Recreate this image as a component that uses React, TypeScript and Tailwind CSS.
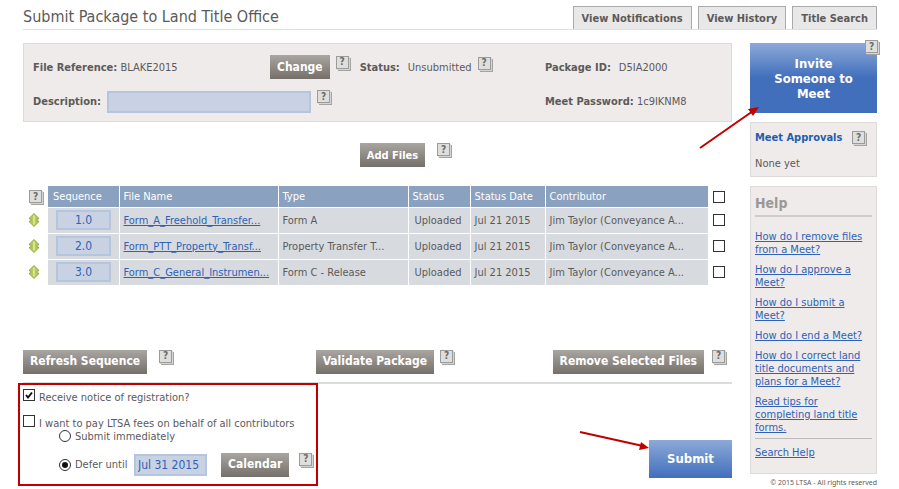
import type { ReactNode } from "react";
import { clsx } from "clsx";

const TABS = ["View Notifications", "View History", "Title Search"];

const FILES = [
  { seq: "1.0", name: "Form_A_Freehold_Transfer...", type: "Form A" },
  { seq: "2.0", name: "Form_PTT_Property_Transf...", type: "Property Transfer T..." },
  { seq: "3.0", name: "Form_C_General_Instrumen...", type: "Form C - Release" },
];

const HELP_LINKS = [
  "How do I remove files from a Meet?",
  "How do I approve a Meet?",
  "How do I submit a Meet?",
  "How do I end a Meet?",
  "How do I correct land title documents and plans for a Meet?",
  "Read tips for completing land title forms.",
];

const FIELD = "border-2 border-[#b4c5dd] bg-[#c9d2e3] text-[#2f62b5] outline-none";

function HelpButton({ className }: { className?: string }) {
  return (
    <button
      type="button"
      aria-label="Help"
      className={clsx(
        "flex size-[13px] shrink-0 items-center justify-center border border-[#9b9b99] bg-[#dededc] text-[10px] leading-none font-bold text-[#6b6b6b] shadow-[1px_1px_0_#d5d5d3,2px_2px_0_#a3a3a1]",
        className
      )}
    >
      ?
    </button>
  );
}

function GrayButton({ children, small }: { children: ReactNode; small?: boolean }) {
  return (
    <button
      type="button"
      className={clsx(
        "h-6 shrink-0 bg-linear-to-b from-[#a9a5a0] to-[#76706a] px-[7px] font-bold whitespace-nowrap text-white",
        small ? "text-[11px]" : "text-[12px]"
      )}
    >
      {children}
    </button>
  );
}

function Checkbox({ id, label, checked }: { id: string; label?: string; checked?: boolean }) {
  return (
    <span className="relative block size-3 shrink-0">
      <input
        id={id}
        type="checkbox"
        aria-label={label}
        defaultChecked={checked}
        className="peer block size-3 appearance-none border border-[#333] bg-white"
      />
      <svg viewBox="0 0 12 12" className="pointer-events-none absolute inset-0 hidden size-3 peer-checked:block">
        <path d="M3 6 L5 8.5 L9 3.5" fill="none" stroke="#111" strokeWidth="2" />
      </svg>
    </span>
  );
}

function Radio({ id, checked }: { id: string; checked?: boolean }) {
  return (
    <input
      id={id}
      type="radio"
      name="payment"
      defaultChecked={checked}
      className="flex size-3 shrink-0 appearance-none items-center justify-center rounded-full border border-[#333] bg-white checked:before:size-1.5 checked:before:rounded-full checked:before:bg-[#111]"
    />
  );
}

function SortIcon() {
  return (
    <svg viewBox="0 0 10 14" className="ml-1.5 block h-3.5 w-2.5">
      <path
        d="M5 .5 L9.5 5 V6 H8 V8 H9.5 V9 L5 13.5 L.5 9 V8 H2 V6 H.5 V5 Z"
        fill="#b7cc58"
        stroke="#94a94a"
        strokeWidth="1"
      />
      <path d="M5 2.5 V11.5" stroke="#d6e38f" strokeWidth="2" />
    </svg>
  );
}

export default function App() {
  return (
    <div className="bg-white pr-[22px] pl-[23px] font-['DejaVu_Sans_Condensed','DejaVu_Sans',sans-serif] text-[11px] leading-[13px] text-[#5c5a59]">
      {/* Header */}
      <header className="flex items-end justify-between border-b border-[#e0e0e0] pt-1.5">
        <h1 className="pb-0.5 text-[16px] leading-5">Submit Package to Land Title Office</h1>
        <nav className="flex gap-1.5">
          {TABS.map((tab) => (
            <a
              key={tab}
              href="#"
              className="h-[23px] border border-b-0 border-[#aaa] bg-[#e8e8e8] px-2 pt-[5px] text-[11px] leading-[14px] font-bold"
            >
              {tab}
            </a>
          ))}
        </nav>
      </header>

      <div className="flex gap-[18px] pt-[13px]">
        <main className="min-w-0 flex-1">
          {/* Package details */}
          <section className="grid h-[79px] grid-cols-[237px_275px_1fr] grid-rows-[46px_1fr] items-center border border-[#dedad7] bg-[#eeebea] pl-[9px]">
            <div>
              <b>File Reference:</b> BLAKE2015
            </div>
            <div className="flex items-center">
              <GrayButton>Change</GrayButton>
              <HelpButton className="mb-2.5 ml-1.5" />
              <b className="ml-[11px]">Status:</b>
              <span className="ml-2">Unsubmitted</span>
              <HelpButton className="mb-2 ml-1.5" />
            </div>
            <div>
              <b>Package ID:</b>
              <span className="ml-2">D5IA2000</span>
            </div>
            <div className="col-span-2 flex items-center pb-[11px]">
              <label htmlFor="description" className="w-[74px] font-bold">
                Description:
              </label>
              <input id="description" className={clsx(FIELD, "h-[22px] w-[204px] px-1")} />
              <HelpButton className="mb-2.5 ml-1.5" />
            </div>
            <div className="pb-[11px]">
              <b>Meet Password:</b> 1c9IKNM8
            </div>
          </section>

          <div className="flex justify-center gap-3 pt-[21px] pl-[55px]">
            <GrayButton small>Add Files</GrayButton>
            <HelpButton />
          </div>

          {/* Package files */}
          <table className="mt-[19px] w-full table-fixed text-left whitespace-nowrap">
            <thead>
              <tr className="h-[21px] font-normal text-white">
                <th className="w-[25px] pl-1.5">
                  <HelpButton />
                </th>
                <th className="w-[71px] border-r border-b border-white bg-[#8aa1bf] pl-[5px] font-normal">Sequence</th>
                <th className="w-[159px] border-r border-b border-white bg-[#8aa1bf] pl-1 font-normal">File Name</th>
                <th className="w-[130px] border-r border-b border-white bg-[#8aa1bf] pl-1 font-normal">Type</th>
                <th className="w-[62px] border-r border-b border-white bg-[#8aa1bf] pl-1 font-normal">Status</th>
                <th className="w-[75px] border-r border-b border-white bg-[#8aa1bf] pl-1 font-normal">Status Date</th>
                <th className="border-b border-white bg-[#8aa1bf] pl-1 font-normal">Contributor</th>
                <th className="w-6 pl-[5px]">
                  <Checkbox id="all-files" label="Select all files" />
                </th>
              </tr>
            </thead>
            <tbody>
              {FILES.map((file) => (
                <tr key={file.seq} className="h-[26px]">
                  <td>
                    <SortIcon />
                  </td>
                  <td className="border-r border-b border-white bg-[#d7dadf] pl-2">
                    <input
                      aria-label={`Sequence of ${file.name}`}
                      defaultValue={file.seq}
                      className={clsx(FIELD, "block h-5 w-[55px] text-center text-[12px]")}
                    />
                  </td>
                  <td className="border-r border-b border-white bg-[#d7dadf] pl-1">
                    <a href="#" className="text-[#2f62b5] underline">
                      {file.name}
                    </a>
                  </td>
                  <td className="border-r border-b border-white bg-[#d7dadf] pl-1">{file.type}</td>
                  <td className="border-r border-b border-white bg-[#d7dadf] pl-1.5">Uploaded</td>
                  <td className="border-r border-b border-white bg-[#d7dadf] pl-1">Jul 21 2015</td>
                  <td className="border-b border-white bg-[#d7dadf] pl-1">Jim Taylor (Conveyance A...</td>
                  <td className="pl-[5px]">
                    <Checkbox id={`file-${file.seq}`} label={`Select ${file.name}`} />
                  </td>
                </tr>
              ))}
            </tbody>
          </table>

          {/* File actions */}
          <div className="mt-16 flex justify-between border-b-2 border-[#dcdcdc] pr-[7px] pb-2">
            <div className="flex gap-3">
              <GrayButton>Refresh Sequence</GrayButton>
              <HelpButton />
            </div>
            <div className="ml-11 flex gap-1.5">
              <GrayButton>Validate Package</GrayButton>
              <HelpButton />
            </div>
            <div className="flex gap-2">
              <GrayButton>Remove Selected Files</GrayButton>
              <HelpButton />
            </div>
          </div>

          <div className="-mt-px flex items-end justify-between">
            {/* Registration options */}
            <section className="-ml-[5px] w-[300px] border-2 border-[#c00000] pt-1 pb-[7px] pl-[3px]">
              <div className="flex items-start gap-1">
                <Checkbox id="notice" checked />
                <label htmlFor="notice" className="pt-0.5">Receive notice of registration?</label>
              </div>
              <div className="mt-[11px] flex items-start gap-1">
                <Checkbox id="pay-fees" />
                <label htmlFor="pay-fees" className="pt-0.5 whitespace-nowrap">
                  I want to pay LTSA fees on behalf of all contributors
                </label>
              </div>
              <div className="flex items-center gap-1 pl-9">
                <Radio id="immediately" />
                <label htmlFor="immediately">Submit immediately</label>
              </div>
              <div className="mt-2.5 flex items-center pl-9">
                <Radio id="defer" checked />
                <label htmlFor="defer" className="ml-1 w-[59px]">Defer until</label>
                <input
                  aria-label="Defer date"
                  defaultValue="Jul 31 2015"
                  className={clsx(FIELD, "h-[22px] w-[73px] px-0.5 text-[12px]")}
                />
                <span className="ml-3.5 flex gap-2.5">
                  <GrayButton>Calendar</GrayButton>
                  <HelpButton />
                </span>
              </div>
            </section>

            <div className="relative mb-2">
              <button type="button" className="block h-[38px] w-[83px] bg-linear-to-b from-[#8da9d8] to-[#416fbc] text-[13px] font-bold text-white">
                Submit
              </button>
              <svg viewBox="0 0 70 22" className="absolute right-[83px] bottom-[27px] h-[22px] w-[70px]">
                <path d="M1 3 L64 17" stroke="#c00000" strokeWidth="2" />
                <path d="M70 19 L60 21 L62 13 Z" fill="#c00000" />
              </svg>
            </div>
          </div>
        </main>

        <aside className="w-[127px] shrink-0">
          <div className="relative">
            <button
              type="button"
              className="block h-[70px] w-full bg-linear-to-b from-[#8da9d8] via-[#416fbc] to-[#416fbc] px-4 text-[13px] leading-[15px] font-bold text-white"
            >
              Invite Someone to Meet
            </button>
            <HelpButton className="absolute -top-[3px] -right-px" />
            <svg viewBox="0 0 60 43" className="absolute right-[118px] -bottom-9 h-[43px] w-[60px]">
              <path d="M1 42 L54 5" stroke="#c00000" strokeWidth="2" />
              <path d="M60 1 L49 3 L54 10 Z" fill="#c00000" />
            </svg>
          </div>

          <section className="mt-[9px] h-[55px] border border-[#dedad7] bg-[#eeebea] px-1 pt-2">
            <div className="flex justify-between pr-[7px]">
              <h2 className="font-bold whitespace-nowrap text-[#1f5eb0]">Meet Approvals</h2>
              <HelpButton />
            </div>
            <p className="mt-[13px]">None yet</p>
          </section>

          {/* Help */}
          <section className="mt-[9px] border border-[#dedad7] bg-[#eeebea] px-1 pb-3.5">
            <h2 className="border-b-2 border-[#cfcccb] pt-2 pb-1 text-[14px] leading-4 font-bold text-[#9a9896]">Help</h2>
            <ul className="space-y-[7px] pt-[13px]">
              {HELP_LINKS.map((link) => (
                <li key={link}>
                  <a href="#" className="text-[#2f62b5] underline">
                    {link}
                  </a>
                </li>
              ))}
            </ul>
            <div className="mt-1 border-t border-[#bbb] pt-[7px]">
              <a href="#" className="text-[#2f62b5] underline">
                Search Help
              </a>
            </div>
          </section>
          <p className="mt-1 text-right font-['Noto_Sans',sans-serif] text-[7px] leading-[10px] whitespace-nowrap">
            © 2015 LTSA - All rights reserved
          </p>
        </aside>
      </div>
    </div>
  );
}
